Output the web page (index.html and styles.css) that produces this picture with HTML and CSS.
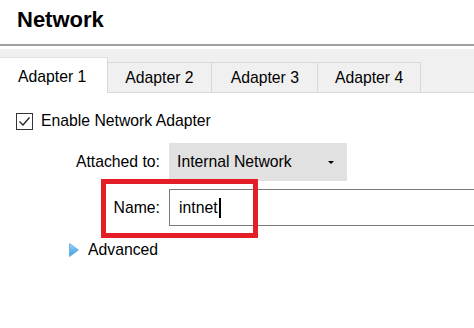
FILE: index.html
```html
<!DOCTYPE html>
<html lang="en">
<head>
    <meta charset="UTF-8">
    <meta name="viewport" content="width=device-width, initial-scale=1.0">
    <title>Network</title>
    <link rel="stylesheet" href="styles.css">
</head>
<body>

<div class="page">
    <div class="header">
        <h1>Network</h1>
    </div>

    <div class="tabs">
        <div class="tab active">Adapter 1</div>
        <div class="tab">Adapter 2</div>
        <div class="tab wide">Adapter 3</div>
        <div class="tab">Adapter 4</div>
    </div>

    <div class="content">
        <label class="check-row">
            <span class="checkbox">
                <svg width="17" height="17" viewBox="0 0 17 17">
                    <polyline points="3.5,8.5 7,12 13.5,4.5" fill="none" stroke="#222" stroke-width="1.3"/>
                </svg>
            </span>
            Enable Network Adapter
        </label>

        <div class="form-grid">
            <div class="form-label">Attached to:</div>
            <div class="dropdown">
                <span>Internal Network</span>
                <span class="arrow"></span>
            </div>

            <div class="form-label">Name:</div>
            <div class="text-input">intnet<span class="caret"></span></div>
        </div>

        <div class="advanced">
            <svg width="10" height="14" viewBox="0 0 10 14">
                <defs>
                    <linearGradient id="tri" x1="0" y1="0" x2="0" y2="1">
                        <stop offset="0" stop-color="#9fd3f7"/>
                        <stop offset="1" stop-color="#3c9be6"/>
                    </linearGradient>
                </defs>
                <polygon points="0.5,0.5 9.5,7 0.5,13.5" fill="url(#tri)" stroke="#5aa9e6" stroke-width="0.8"/>
            </svg>
            <span>Advanced</span>
        </div>
    </div>

    <!-- highlight around the name field -->
    <div class="highlight"></div>
</div>

</body>
</html>
```

FILE: styles.css
```css
body {
    margin: 0;
    padding: 0;
    background-color: #fff;
    font-family: 'Liberation Sans', Arial, sans-serif;
    color: #000;
}
.page {
    position: relative;
    width: 474px;
    height: 328px;
    overflow: hidden;
}
.header {
    height: 46px;
    border-bottom: 2px solid #a0a0a0;
    padding: 8px 17px 0;
    box-sizing: border-box;
}
h1 {
    margin: 0;
    font-size: 22px;
    line-height: 24px;
    font-weight: bold;
}
.tabs {
    margin-top: 3px;
    height: 44px;
    box-sizing: border-box;
    background-color: #f0f0f0;
    border-bottom: 1px solid #d9d9d9;
    display: flex;
    align-items: flex-end;
}
.tab {
    height: 30px;
    line-height: 30px;
    padding: 0 17px;
    font-size: 15.75px;
    border-top: 1px solid #d9d9d9;
    border-right: 1px solid #d9d9d9;
    box-sizing: border-box;
}
.tab.wide {
    padding: 0 18px 0 19px;
}
.tab.active {
    height: 36px;
    line-height: 34px;
    padding: 2px 21px 0 18px;
    margin-bottom: -1px;
    background-color: #fff;
    border-top: 1px solid #e3e3e3;
}
.content {
    padding-top: 18px;
    font-size: 15.75px;
}
.check-row {
    display: flex;
    align-items: center;
    height: 20px;
    padding-left: 16px;
    gap: 8px;
}
.checkbox {
    width: 17px;
    height: 17px;
    border: 1px solid #333;
    box-sizing: border-box;
    display: flex;
}
.checkbox svg {
    margin: -1px;
}
.form-grid {
    margin-top: 12px;
    display: grid;
    grid-template-columns: 160px 1fr;
    grid-template-rows: 38px 37px;
    column-gap: 9px;
    row-gap: 8px;
}
.form-label {
    text-align: right;
    align-self: center;
}
.dropdown {
    width: 178px;
    background-color: #e1e1e1;
    display: flex;
    align-items: center;
    justify-content: space-between;
    padding: 0 13px 0 8px;
    box-sizing: border-box;
}
.arrow {
    width: 0;
    height: 0;
    border-left: 3px solid transparent;
    border-right: 3px solid transparent;
    border-top: 3px solid #000;
}
.text-input {
    width: 320px;
    border: 1px solid #7a7a7a;
    box-sizing: border-box;
    display: flex;
    align-items: center;
    padding-left: 9px;
}
.caret {
    width: 2px;
    height: 20px;
    background-color: #000;
    margin-left: 1px;
}
.advanced {
    margin-top: 14px;
    padding-left: 69px;
    height: 20px;
    display: flex;
    align-items: center;
    gap: 9px;
}
.highlight {
    position: absolute;
    left: 101px;
    top: 179px;
    width: 157px;
    height: 59px;
    border: 5px solid #e31e26;
    box-sizing: border-box;
}
```
